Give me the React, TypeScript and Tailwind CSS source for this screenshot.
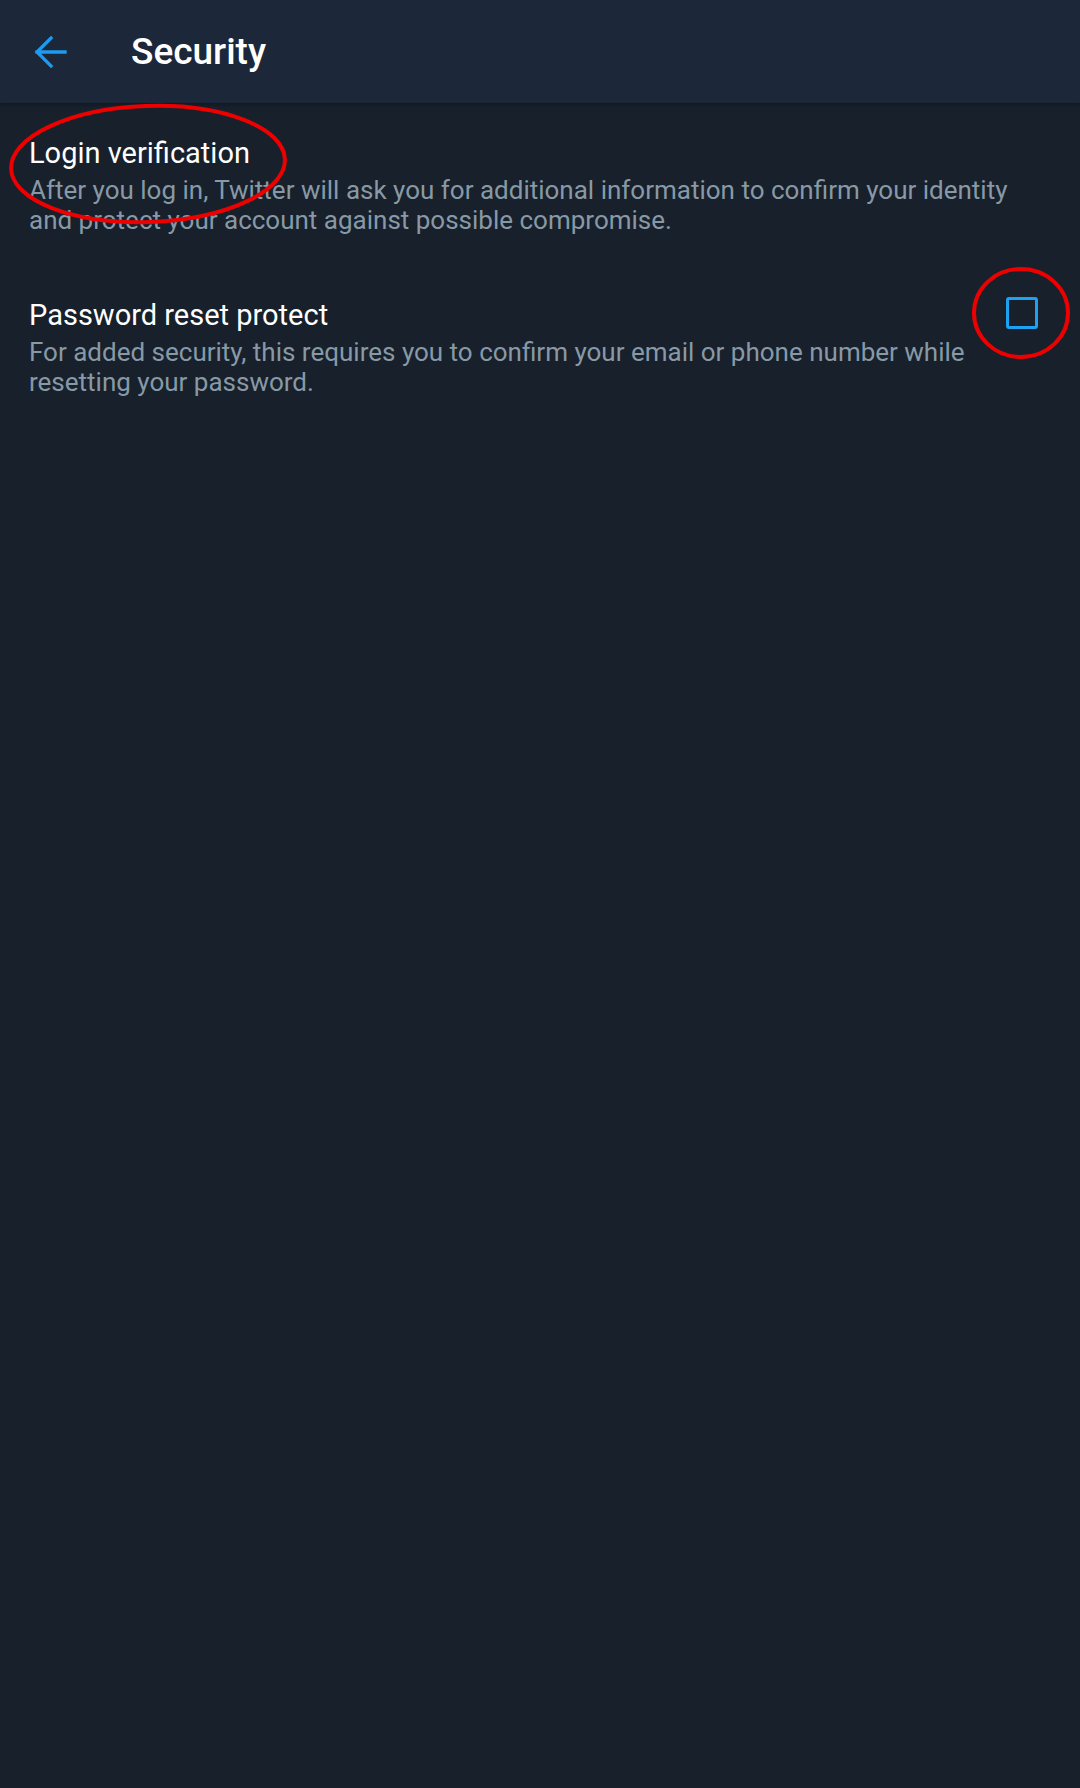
import React from 'react'

const font = { fontFamily: 'Roboto, "Noto Sans", sans-serif' }

function BackArrow() {
  return (
    <svg width="34" height="34" viewBox="0 0 34 34" fill="none" className="block">
      <path d="M31 17H3M17 3L3 17l14 14" stroke="#1d9bf0" strokeWidth="3.3" strokeLinecap="square" />
    </svg>
  )
}

function SettingRow({ title, desc, checkbox }: { title: string; desc: string; checkbox?: boolean }) {
  return (
    <div className="flex items-start pl-[29px] pr-[42px] py-[31px]">
      <div className={checkbox ? 'flex-1 pr-[28px]' : 'flex-1 pr-[8px]'}>
        <p className="text-[29px] leading-[37px] text-white">{title}</p>
        <p className="mt-[3px] text-[26px] leading-[30px] text-[#8899a6]">{desc}</p>
      </div>
      {checkbox && (
        <div className="w-[32px] h-[32px] border-[3px] border-[#1da1f2] rounded-[3px] shrink-0" />
      )}
    </div>
  )
}

export default function App() {
  return (
    <div style={font} className="relative w-[1080px] min-h-[1788px] bg-[#17202b]">
      <header className="h-[103px] bg-[#1c2839] flex items-center shadow-[0_2px_3px_rgba(0,0,0,0.25)]">
        <div className="w-[131px] pl-[34px]">
          <BackArrow />
        </div>
        <h1 className="text-[37px] font-medium text-white leading-none">Security</h1>
      </header>

      <div className="pt-[1px]">
        <SettingRow
          title="Login verification"
          desc="After you log in, Twitter will ask you for additional information to confirm your identity and protect your account against possible compromise."
        />
        <SettingRow
          title="Password reset protect"
          desc="For added security, this requires you to confirm your email or phone number while resetting your password."
          checkbox
        />
      </div>

      {/* red annotation marks */}
      <svg className="absolute inset-0 pointer-events-none" width="1080" height="1788">
        <ellipse cx="148" cy="164" rx="137" ry="58" fill="none" stroke="#ec0000" strokeWidth="4" transform="rotate(-2 148 164)" />
        <ellipse cx="1021" cy="313" rx="47" ry="44" fill="none" stroke="#ec0000" strokeWidth="4" />
      </svg>
    </div>
  )
}
